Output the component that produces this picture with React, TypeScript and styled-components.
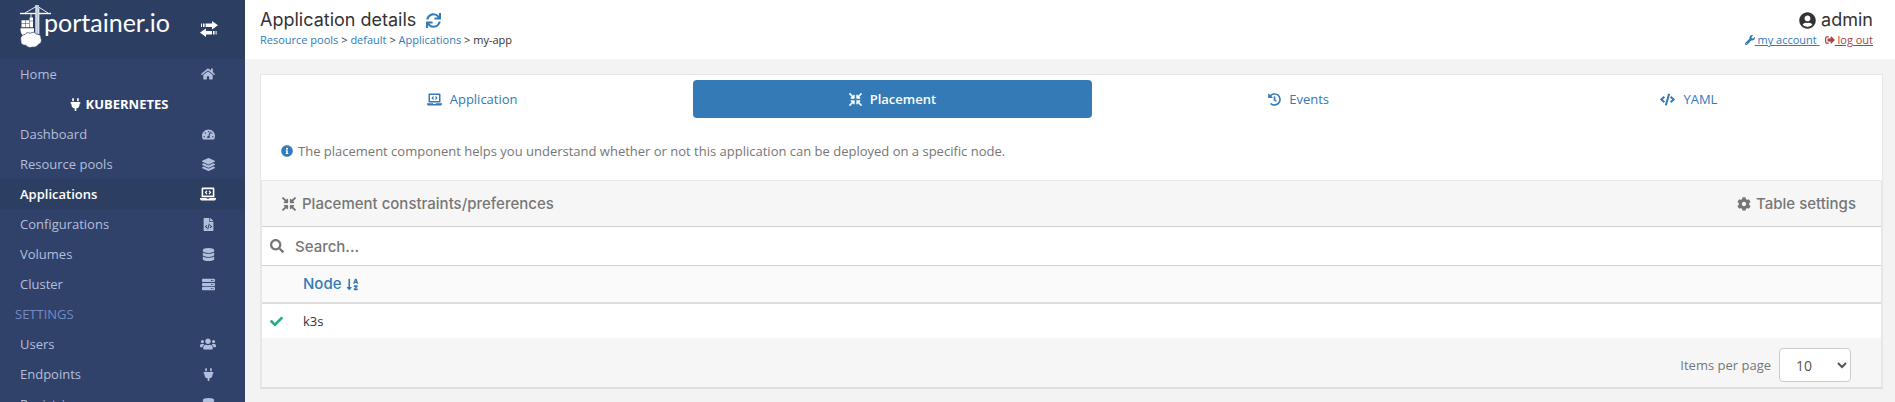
import React from "react";
import styled, { createGlobalStyle, css } from "styled-components";
import {
  FaCheck, FaCode, FaCog, FaCompressArrowsAlt, FaDatabase, FaFileCode, FaHistory, FaHome,
  FaInfoCircle, FaLaptopCode, FaLayerGroup, FaPlug, FaSearch, FaServer, FaSignOutAlt,
  FaSortAlphaDown, FaSync, FaTachometerAlt, FaUserCircle, FaUsers, FaWrench,
} from "react-icons/fa";
import type { IconType } from "react-icons";

const color = {
  sidebar: "#30426a",
  sidebarDark: "#2d3e63",
  sidebarText: "#b2bfdc",
  sidebarTitle: "#738bc0",
  link: "#337ab7",
  danger: "#a94442",
  muted: "#767676",
  text: "#333333",
  page: "#f3f3f3",
  panel: "#f6f6f6",
  edge: "#e7e7e7",
  rule: "#d0d0d0",
  ok: "#23ae89",
};

const heading = `Inter, "Open Sans", sans-serif`;

const GlobalStyle = createGlobalStyle`
  *, *::before, *::after { box-sizing: border-box; }
  body {
    margin: 0;
    background: ${color.page};
    color: ${color.text};
    font: 13px/20px "Open Sans", "Noto Sans", sans-serif;
  }
  a { color: ${color.link}; text-decoration: none; }
  svg { flex: none; }
`;

const Shell = styled.div`
  display: grid;
  grid-template-columns: 245px minmax(0, 1fr);
  height: 100vh;
`;

const Sidebar = styled.nav`
  background: ${color.sidebar};
  overflow: hidden;
`;

const Brand = styled.div`
  display: flex;
  align-items: flex-start;
  justify-content: space-between;
  height: 59px;
  padding: 0 27px 0 20px;
  background: ${color.sidebarDark};
`;

const Collapse = styled.button`
  border: 0;
  padding: 0;
  margin-top: 21px;
  height: 18px;
  background: none;
  cursor: pointer;
`;

const Menu = styled.ul`
  list-style: none;
  margin: 0;
  padding: 0;
`;

const MenuLink = styled.a<{ $active?: boolean }>`
  display: flex;
  align-items: center;
  justify-content: space-between;
  height: 30px;
  padding: 0 29px 0 20px;
  color: ${color.sidebarText};
  ${p => p.$active && css`
    color: #fff;
    background: ${color.sidebarDark};
    font-weight: 600;
  `}
`;

const IconSlot = styled.span`
  display: flex;
  justify-content: center;
  width: 16px;
`;

const EndpointTitle = styled.li`
  display: flex;
  align-items: center;
  justify-content: center;
  gap: 4px;
  height: 30px;
  padding-right: 8px;
  color: #fff;
  font-weight: 700;
`;

const SectionTitle = styled.li`
  height: 30px;
  padding-left: 15px;
  line-height: 30px;
  color: ${color.sidebarTitle};
`;

const Main = styled.main`
  min-width: 0;
  overflow: hidden;
`;

const Header = styled.header`
  display: flex;
  justify-content: space-between;
  height: 59px;
  padding: 10px 22px 0 15px;
  background: #fff;
`;

const Title = styled.h1`
  display: flex;
  align-items: center;
  gap: 10px;
  margin: 0;
  font-family: ${heading};
  font-size: 18px;
  line-height: 20px;
  font-weight: 400;
`;

const Refresh = styled.button`
  display: flex;
  border: 0;
  padding: 0;
  background: none;
  color: ${color.link};
  cursor: pointer;
`;

const Trail = styled.div`
  font-size: 11px;
  line-height: 20px;
`;

const Account = styled.div`
  display: flex;
  flex-direction: column;
  align-items: flex-end;
`;

const UserName = styled.div`
  display: flex;
  align-items: center;
  gap: 5px;
  font-family: ${heading};
  font-size: 18px;
  line-height: 20px;
`;

const AccountLinks = styled.div`
  display: flex;
  gap: 5px;
  font-size: 11px;
  line-height: 20px;
`;

const AccountLink = styled.a<{ $danger?: boolean }>`
  white-space: pre;
  text-decoration: underline;
  color: ${p => (p.$danger ? color.danger : color.link)};
  svg { vertical-align: -1px; }
`;

const Widget = styled.section`
  margin: 15px 12px 0 15px;
  border: 1px solid ${color.edge};
  border-bottom: 2px solid #dfdfdf;
  background: #fff;
`;

const Tabs = styled.div`
  display: grid;
  grid-template-columns: 422fr 398fr 394fr 366fr;
  column-gap: 10px;
  padding: 5px 10px 0 0;
`;

const Tab = styled.button<{ $active?: boolean }>`
  display: flex;
  align-items: center;
  justify-content: center;
  gap: 8px;
  height: 38px;
  border: 0;
  border-radius: 4px;
  padding: 0;
  font: inherit;
  font-weight: ${p => (p.$active ? 600 : 400)};
  color: ${p => (p.$active ? "#fff" : color.link)};
  background: ${p => (p.$active ? color.link : "transparent")};
  cursor: pointer;
`;

const Hint = styled.p`
  display: flex;
  align-items: center;
  gap: 5px;
  margin: 0;
  padding: 23px 20px 19px;
  color: ${color.muted};
  svg { color: ${color.link}; }
`;

const Datatable = styled.div`
  border: solid ${color.edge};
  border-width: 1px 1px 0;
`;

const Toolbar = styled.div`
  display: flex;
  align-items: center;
  justify-content: space-between;
  height: 46px;
  padding: 0 25px 0 20px;
  border-bottom: 1px solid ${color.rule};
  background: ${color.panel};
  color: ${color.muted};
  font-family: ${heading};
  font-size: 15px;
`;

const ToolbarTitle = styled.h2`
  display: flex;
  align-items: center;
  gap: 6px;
  margin: 0;
  font-size: 15px;
  font-weight: 500;
`;

const Settings = styled.button`
  display: flex;
  align-items: center;
  gap: 5px;
  border: 0;
  padding: 0;
  background: none;
  color: inherit;
  font: inherit;
  font-weight: 500;
  cursor: pointer;
`;

const SearchBar = styled.label`
  display: flex;
  align-items: center;
  gap: 11px;
  height: 39px;
  padding: 0 8px;
  border-bottom: 1px solid ${color.rule};
  color: ${color.muted};
`;

const SearchInput = styled.input`
  flex: 1;
  min-width: 0;
  border: 0;
  padding: 0;
  outline: 0;
  background: none;
  font-family: ${heading};
  font-size: 15px;
  font-weight: 500;
  color: ${color.text};
  &::placeholder { color: ${color.muted}; opacity: 1; }
`;

const Table = styled.table`
  width: 100%;
  border-collapse: separate;
  border-spacing: 0;
  text-align: left;
`;

const HeadCell = styled.th<{ $narrow?: boolean }>`
  width: ${p => (p.$narrow ? "41px" : "auto")};
  height: 38px;
  padding: 0;
  border-bottom: 2px solid #dddddd;
  background: #fafafa;
  font-family: ${heading};
  font-size: 15px;
  font-weight: 500;
`;

const SortLink = styled.a`
  display: inline-flex;
  align-items: center;
  gap: 4px;
`;

const Cell = styled.td<{ $icon?: boolean }>`
  height: 34px;
  padding: 0 0 0 ${p => (p.$icon ? "8px" : "0")};
  svg { display: block; color: ${color.ok}; }
`;

const Footer = styled.div`
  display: flex;
  align-items: center;
  justify-content: flex-end;
  gap: 8px;
  height: 49px;
  padding: 5px 30px 0 0;
  background: ${color.panel};
  color: ${color.muted};
`;

const PageSize = styled.select`
  width: 72px;
  height: 34px;
  border: 1px solid #cccccc;
  border-radius: 4px;
  padding: 0 0 0 12px;
  background: #fff;
  color: #555555;
  font: 14px "Open Sans", "Noto Sans", sans-serif;
`;

const Logo = () => (
  <svg width="160" height="50" viewBox="0 0 160 50" role="img" aria-label="portainer.io">
    <g fill="none" stroke="#fff">
      <path d="M0 13.5H31" strokeWidth="1.4" />
      <path d="M5 13 17 6 28 13" strokeWidth="0.9" />
      <path d="M11 13.5V18" strokeWidth="0.8" />
    </g>
    <path d="M15.6 5h3.4v29h-3.4z" fill="#b9c4d8" />
    <path d="M15.9 5v29M18.9 8v26" stroke="#fff" strokeWidth="0.8" />
    <g fill="#fff">
      <path d="M9.6 17.4h3.4v3.4H9.6z M1.5 20.2h3.7v3.4H1.5z M5.7 20.2h3.5v3.4H5.7z M1.5 24.1h3.7v3.2H1.5z M5.7 24.1h3.5v3.2H5.7z M9.7 21.3H13v6H9.7z" />
      <path d="M0.5 28.2h13.5v5l-5 2.5H3C1 34 .4 31 .5 28.2z" />
      <path
        d="M5 34.5c1-1.8 3.4-2.6 5.2-1.2 2-1.6 5.2-1.3 6.3 1 2.6-.5 4.9 1.3 4.3 3.7 1.4 2.3.4 5.8-2.2 6.2-1.2 2-3.7 3.3-6 2.9-2.5 1-5.2.2-6.8-1.9-3 .3-5.6-1.6-4.8-4.4C-.2 38 1.6 34.6 5 34.5z"
        stroke={color.sidebarDark}
        strokeWidth="0.7"
      />
    </g>
    <text x="24" y="32" fill="#fff" fontFamily="Lato, sans-serif" fontSize="25">portainer.io</text>
  </svg>
);

const TransferIcon = () => (
  <svg width="18" height="16" viewBox="0 0 18 16" fill="#fff" aria-hidden="true">
    <path d="M1 2.5h1v3.5H1z M3 2.5h1.6v3.5H3z M5.6 2.5H12V0l6 4.3-6 4.2V6H5.600z" />
    <path d="M0 11.5 6 7.500v2.500h6v3.500H6v2.500z M13 10h1.600v3.500H13z M15.600 10h1v3.500h-1z" />
  </svg>
);

interface MenuEntry { label: string; icon: IconType; size?: number; active?: boolean }

const kubernetesEntries: MenuEntry[] = [
  { label: "Dashboard", icon: FaTachometerAlt },
  { label: "Resource pools", icon: FaLayerGroup },
  { label: "Applications", icon: FaLaptopCode, size: 16, active: true },
  { label: "Configurations", icon: FaFileCode },
  { label: "Volumes", icon: FaDatabase },
  { label: "Cluster", icon: FaServer },
];

const settingsEntries: MenuEntry[] = [
  { label: "Users", icon: FaUsers, size: 16 },
  { label: "Endpoints", icon: FaPlug },
  { label: "Registries", icon: FaDatabase },
];

const tabs: MenuEntry[] = [
  { label: "Application", icon: FaLaptopCode, size: 15 },
  { label: "Placement", icon: FaCompressArrowsAlt, active: true },
  { label: "Events", icon: FaHistory },
  { label: "YAML", icon: FaCode, size: 15 },
];

const MenuItem = ({ label, icon: Icon, size = 13, active }: MenuEntry) => (
  <li>
    <MenuLink href="#" $active={active} aria-current={active ? "page" : undefined}>
      {label}
      <IconSlot><Icon size={size} /></IconSlot>
    </MenuLink>
  </li>
);

export default function App() {
  return (
    <Shell>
      <GlobalStyle />
      <Sidebar>
        <Brand>
          <Logo />
          <Collapse type="button" aria-label="Toggle sidebar"><TransferIcon /></Collapse>
        </Brand>
        <Menu>
          <MenuItem label="Home" icon={FaHome} size={14} />
          <EndpointTitle><FaPlug size={13} />KUBERNETES</EndpointTitle>
          {kubernetesEntries.map(entry => <MenuItem key={entry.label} {...entry} />)}
          <SectionTitle>SETTINGS</SectionTitle>
          {settingsEntries.map(entry => <MenuItem key={entry.label} {...entry} />)}
        </Menu>
      </Sidebar>
      <Main>
        <Header>
          <div>
            <Title>
              Application details
              <Refresh type="button" aria-label="Refresh"><FaSync size={15} /></Refresh>
            </Title>
            <Trail>
              <a href="#">Resource pools</a> &gt; <a href="#">default</a> &gt; <a href="#">Applications</a> &gt; my-app
            </Trail>
          </div>
          <Account>
            <UserName><FaUserCircle size={17} />admin</UserName>
            <AccountLinks>
              <AccountLink href="#"><FaWrench size={10} />{" my account "}</AccountLink>
              <AccountLink href="#" $danger><FaSignOutAlt size={10} />{" log out"}</AccountLink>
            </AccountLinks>
          </Account>
        </Header>
        <Widget>
          <Tabs role="tablist">
            {tabs.map(({ label, icon: Icon, size = 13, active }) => (
              <Tab key={label} type="button" role="tab" aria-selected={!!active} $active={active}>
                <Icon size={size} />{label}
              </Tab>
            ))}
          </Tabs>
          <Hint>
            <FaInfoCircle size={12} />
            The placement component helps you understand whether or not this application can be deployed on a specific node.
          </Hint>
          <Datatable>
            <Toolbar>
              <ToolbarTitle><FaCompressArrowsAlt size={14} />Placement constraints/preferences</ToolbarTitle>
              <Settings type="button"><FaCog size={14} />Table settings</Settings>
            </Toolbar>
            <SearchBar>
              <FaSearch size={14} />
              <SearchInput type="text" placeholder="Search..." aria-label="Search" />
            </SearchBar>
            <Table>
              <thead>
                <tr>
                  <HeadCell $narrow />
                  <HeadCell><SortLink href="#">Node<FaSortAlphaDown size={13} /></SortLink></HeadCell>
                </tr>
              </thead>
              <tbody>
                <tr>
                  <Cell $icon><FaCheck size={13} /></Cell>
                  <Cell>k3s</Cell>
                </tr>
              </tbody>
            </Table>
            <Footer>
              <label htmlFor="page-size">Items per page</label>
              <PageSize id="page-size" defaultValue="10">
                <option>10</option>
                <option>25</option>
                <option>50</option>
                <option>100</option>
              </PageSize>
            </Footer>
          </Datatable>
        </Widget>
      </Main>
    </Shell>
  );
}
